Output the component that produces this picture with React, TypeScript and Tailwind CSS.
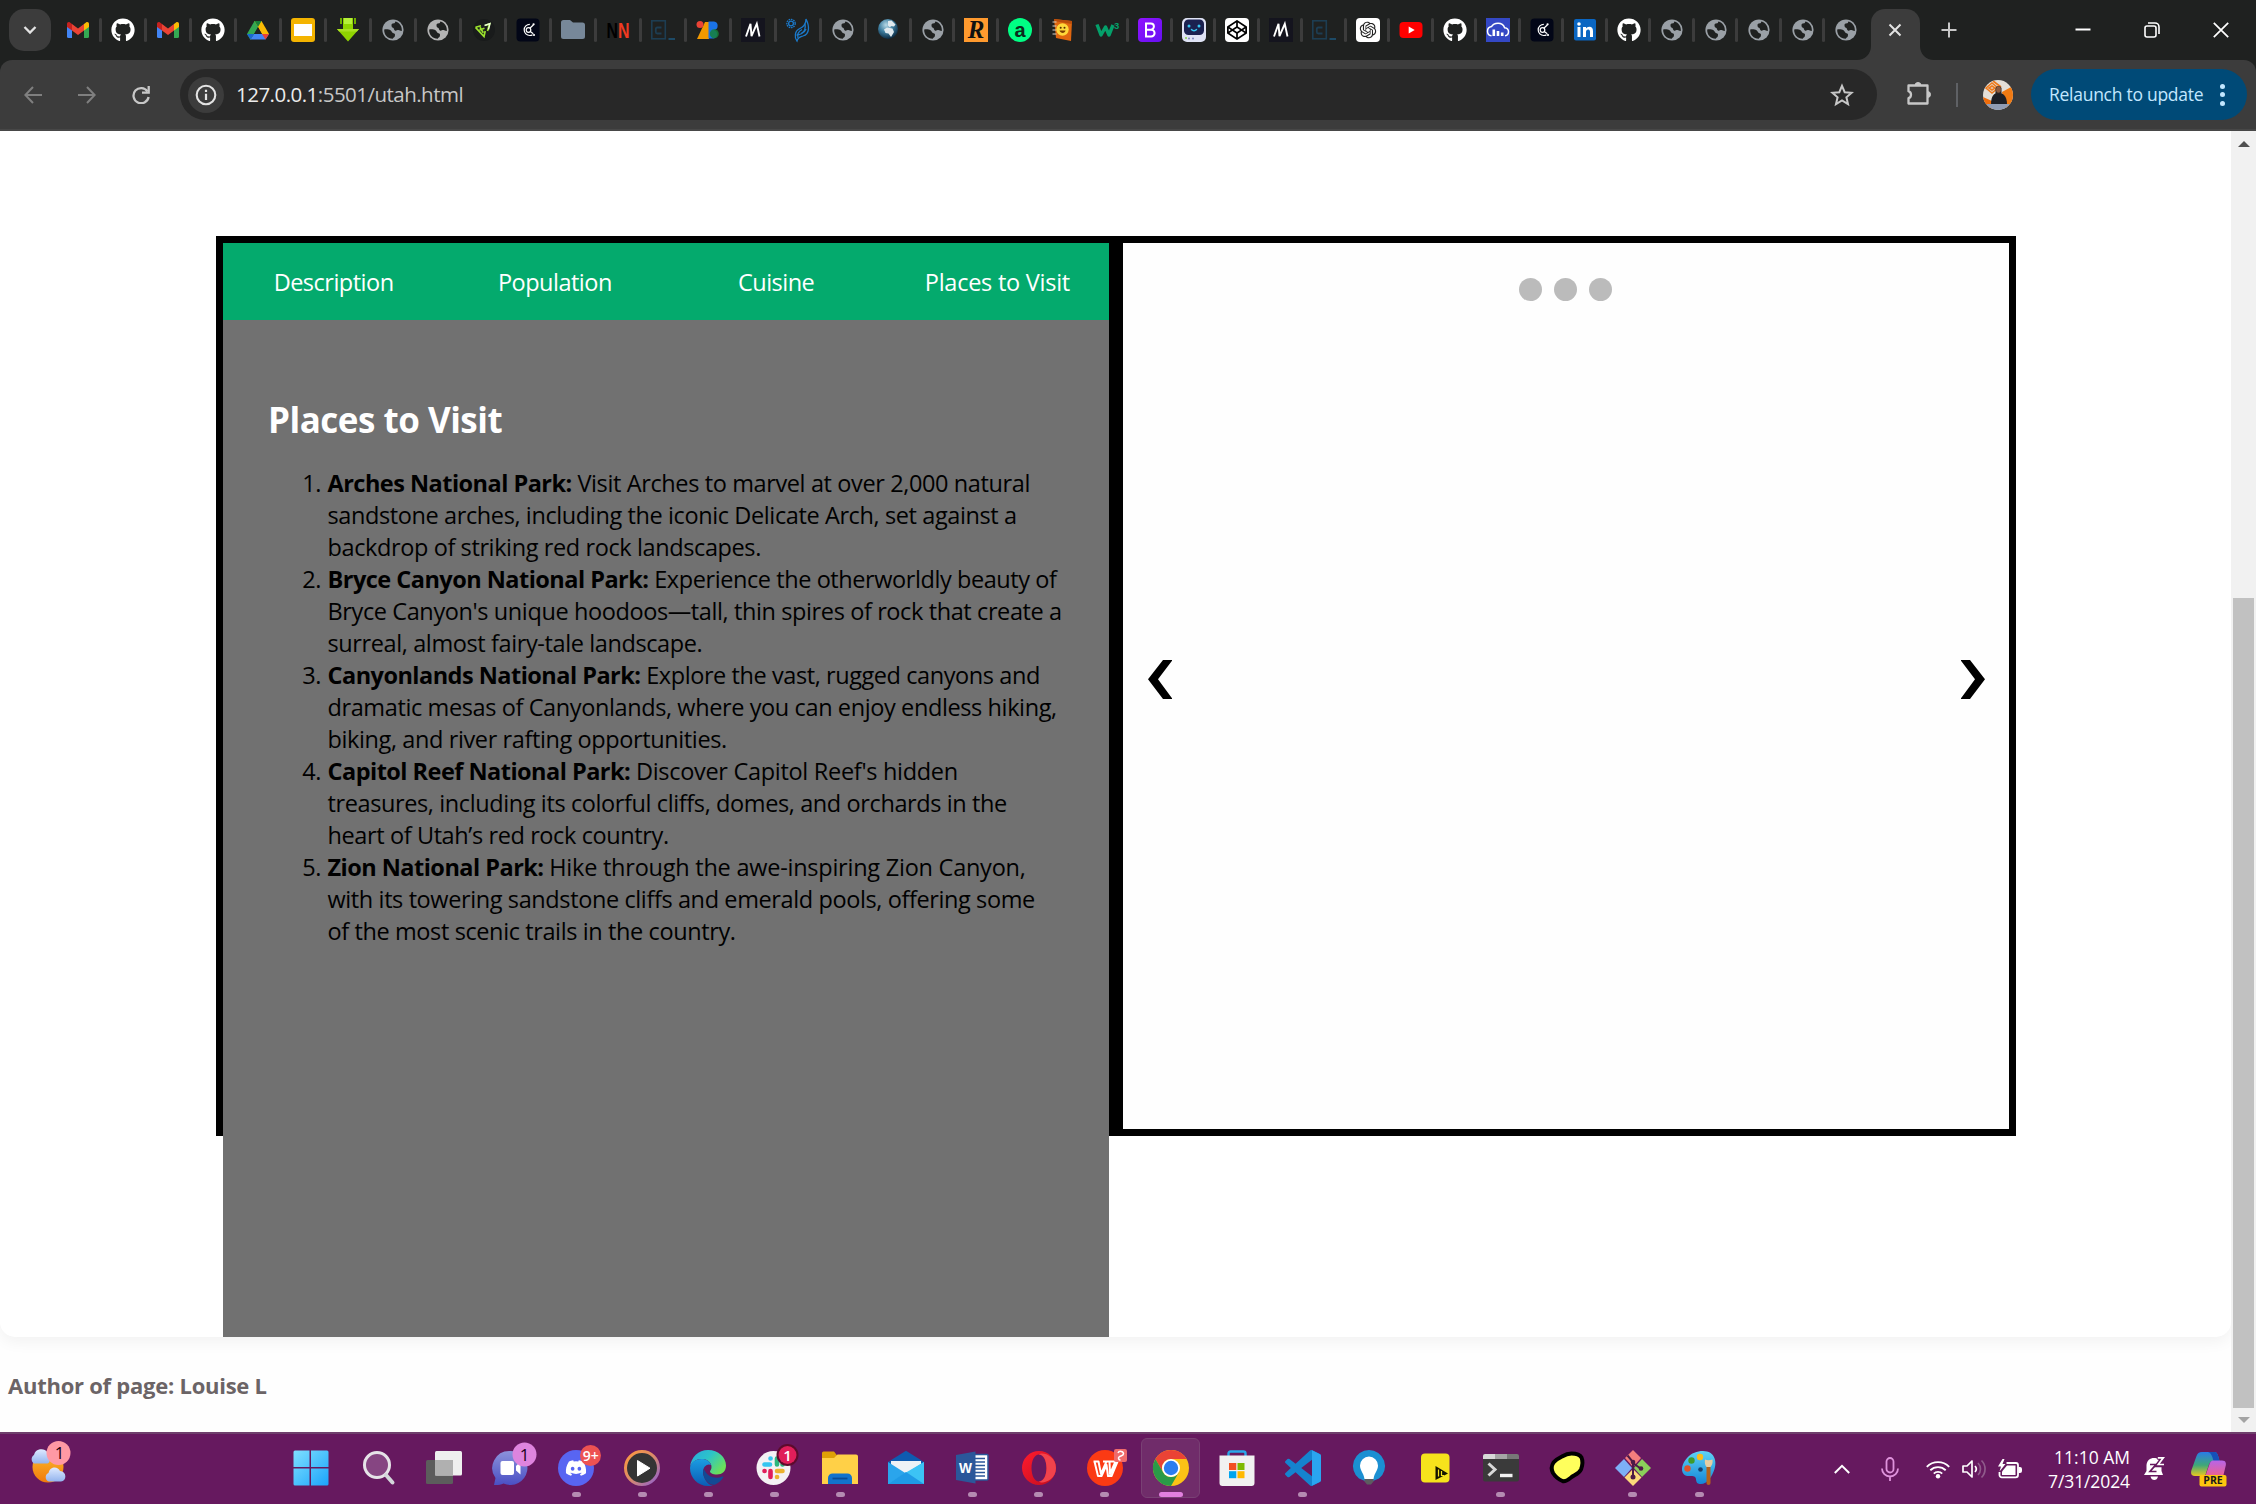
import type { ReactNode } from "react";
import { FaGithub, FaCodepen, FaDiscord } from "react-icons/fa";
import { RiOpenaiFill } from "react-icons/ri";

/* ---------- tab favicons ---------- */

const svg24 = "block h-6 w-6 overflow-visible";

function Gmail() {
  return (
    <svg viewBox="0 0 24 24" className={svg24}>
      <path d="M1 6v12.500A1.500 1.500 0 0 0 2.500 20H6V10z" fill="#4285f4" />
      <path d="M23 6v12.500A1.500 1.500 0 0 1 21.500 20H18V10z" fill="#34a853" />
      <path d="M18 6l2-1.500C21.500 3.500 23 4.500 23 6v3l-5 3.500z" fill="#fbbc04" />
      <path d="M6 12.500V6l6 4.500L18 6v6.500L12 17z" fill="#ea4335" />
      <path d="M1 6c0-1.500 1.500-2.500 3-1.500L6 6v6.500L1 9z" fill="#c5221f" />
    </svg>
  );
}
function Github() {
  return <FaGithub className="h-6 w-6 text-white" />;
}
function Drive() {
  return (
    <svg viewBox="0 0 24 24" className={svg24}>
      <path d="M8.500 3h7L8 16l-3.500 6L1 16z" fill="#34a853" />
      <path d="M8.500 3h7L23 16h-7z" fill="#fbbc04" />
      <path d="M8 16h15l-3.500 5.500h-15z" fill="#4285f4" />
      <path d="M8.500 3L12 9l3.500-6z" fill="#188038" />
      <path d="M23 16l-3.500 5.500L16 16z" fill="#ea4335" />
      <path d="M8 16l-3.500 5.500L1 16z" fill="#1967d2" />
      <path d="M12 9.500L15.700 16H8.200z" fill="#1f2120" />
    </svg>
  );
}
function Slides() {
  return (
    <svg viewBox="0 0 24 24" className={svg24}>
      <rect width="24" height="24" rx="3" fill="#f4b400" />
      <rect x="3" y="6" width="18" height="12" fill="#fff" />
    </svg>
  );
}
function DownArrow() {
  return (
    <svg viewBox="0 0 24 24" className={svg24}>
      <path d="M4 0h2v6H4zM18 0h2v6h-2z" fill="#6fae00" />
      <path d="M7 0h10v11h6L12 23.500 1 11h6z" fill="#8fd400" />
      <path d="M8 0h8v6H8z" fill="#b6f03a" />
      <path d="M1 11h22l-2 2.500H3z" fill="#a9e022" />
    </svg>
  );
}
function Globe({ light }: { light?: boolean }) {
  return (
    <svg viewBox="0 0 24 24" className={svg24}>
      <circle cx="12" cy="12" r="10.600" fill={light ? "#b3b3b3" : "#9aa0a6"} />
      <path
        d="M3.200 11.500C5 11 8 11.200 9.500 12.300c1.400 1 1.300 2.700 3 2.900.900.100 1.600.700 1.500 1.800l-.200 1.300c-.200 1-1.800 1.200-2 2.500C6.500 20.800 2.800 16.500 3.200 11.500z"
        fill="#1f2120"
      />
      <path
        d="M10.500 7.200c0-2 2.200-1.500 3.200-2.200.500-.400.300-1.200.800-1.500 4 1 6.800 5 6.300 9.500-1.300.300-2-.900-3.300-.900-1.600 0-2 .900-3.300.600-1.500-.400-.900-2.400-2.200-2.900-.900-.400-1.500-1.300-1.500-2.600z"
        fill="#1f2120"
      />
    </svg>
  );
}
function GlobeLight() {
  return <Globe light />;
}
function Triangle() {
  return (
    <svg viewBox="0 0 24 24" className={svg24}>
      <circle cx="13" cy="12" r="11" fill="#191b1b" />
      <path d="M4.500 9.300L13 18.500l1.200-5.500M4.500 9.300l5.500-1.600M9 9.300l3.300 5.500M8.500 12l5-1.800M14.500 7.200L18.500 6l-2 7" fill="none" stroke="#9be22d" strokeWidth="1.700" />
      <path d="M13.500 7.500l5.500-2-1.500 6" fill="none" stroke="#e8ffd0" strokeWidth="1.400" />
    </svg>
  );
}
function NightC() {
  return (
    <svg viewBox="0 0 24 24" className={svg24}>
      <rect x=".5" y=".5" width="23" height="23" rx="4" fill="#020617" />
      <path d="M13.800 6.300a5.600 5.600 0 1 0 0 11.200c1.200 0 2-.3 2.700-.8" fill="none" stroke="#fff" strokeWidth="1.200" />
      <circle cx="12.500" cy="12" r="2.300" fill="none" stroke="#fff" strokeWidth="1.200" />
      <path d="M13.800 10.200L17.300 7M14.300 13.500l3 2.300" stroke="#fff" strokeWidth="1.200" />
      <circle cx="17.600" cy="6.300" r="1.100" fill="#fff" />
      <circle cx="18" cy="17" r="1.100" fill="#fff" />
    </svg>
  );
}
function Folder() {
  return (
    <svg viewBox="0 0 24 24" className={svg24}>
      <path d="M0 4.500A2.500 2.500 0 0 1 2.500 2H9l3 2.500h9.500A2.500 2.500 0 0 1 24 7v11.500a2.500 2.500 0 0 1-2.500 2.500h-19A2.500 2.500 0 0 1 0 18.500z" fill="#778899" />
    </svg>
  );
}
function NN() {
  return (
    <svg viewBox="0 0 24 24" className={svg24}>
      <text x="0.500" y="20" fontFamily="Liberation Sans" fontWeight="700" fontSize="22" textLength="11.500" lengthAdjust="spacingAndGlyphs" fill="#000">N</text>
      <text x="12" y="20" fontFamily="Liberation Sans" fontWeight="700" fontSize="22" textLength="11.500" lengthAdjust="spacingAndGlyphs" fill="#f03a20">N</text>
    </svg>
  );
}
function Codecademy() {
  return (
    <svg viewBox="0 0 24 24" className={svg24}>
      <rect x=".8" y="2.800" width="13.500" height="18" fill="none" stroke="#1d3d52" strokeWidth="1.600" />
      <path d="M10.500 9.500H6.300c-1 0-1.500.5-1.500 1.500v3c0 1 .5 1.500 1.500 1.500h4.200" fill="none" stroke="#1d3d52" strokeWidth="1.800" />
      <path d="M17.500 21h6.500" stroke="#1d4a66" strokeWidth="2" />
    </svg>
  );
}
function SevenB() {
  return (
    <svg viewBox="0 0 24 24" className={svg24}>
      <path d="M9 4h4v17H1z" fill="#f29900" />
      <circle cx="4" cy="6.500" r="3.500" fill="#ea4335" />
      <path d="M12.500 3.500H18a4.300 4.300 0 0 1 0 8.500 4.500 4.500 0 0 1 0 8.500h-5.500z" fill="#1a73e8" />
      <circle cx="18.300" cy="15.800" r="4.500" fill="#188038" fillOpacity=".85" />
    </svg>
  );
}
function MimoM() {
  return (
    <svg viewBox="0 0 24 24" className={svg24}>
      <rect width="24" height="24" fill="#14141e" />
      <path d="M5 18.500L9.500 5.800 10.500 18.200 15.800 5.800 18.500 18.500" fill="none" stroke="#fff" strokeWidth="1.900" />
    </svg>
  );
}
function Feather() {
  return (
    <svg viewBox="0 0 24 24" className={svg24}>
      <g fill="none" stroke="#1b79c9" strokeWidth="1.300">
        <circle cx="5" cy="5.500" r="4.200" strokeDasharray="1.600 .8" />
        <circle cx="5" cy="5.500" r="2.400" />
        <path d="M20 1c3.500 7 4 15-3 17-3 1-5 1-6 5-3-4-2-10 2-12 4-2 7-4 7-10z" />
        <path d="M19 6c1 5-1 8-4 9.500M12 20c-1-4 1-7 4-8.500M10.500 17c3 0 8-2 9.500-6" />
      </g>
    </svg>
  );
}
function Earth() {
  return (
    <svg viewBox="0 0 24 24" className={svg24}>
      <defs>
        <radialGradient id="earth" cx=".4" cy=".3" r=".7">
          <stop offset="0" stopColor="#b7d9e6" />
          <stop offset=".5" stopColor="#3f7fa0" />
          <stop offset="1" stopColor="#0d2c44" />
        </radialGradient>
      </defs>
      <circle cx="12" cy="11" r="10" fill="url(#earth)" />
      <path d="M12 3l3.500-.5 4 4-1.500 2-3-.5-1 1.500-2-2zM8 11.500l3-2 5.500 1 1.500 3.500-3 5-2.500-3.500-3-.5z" fill="#dfe9ee" />
    </svg>
  );
}
function LetterTile({ bg, fg, ch, round, italic, serif }: { bg: string; fg: string; ch: string; round: number; italic?: boolean; serif?: boolean }) {
  return (
    <svg viewBox="0 0 24 24" className={svg24}>
      <rect width="24" height="24" rx={round} fill={bg} />
      <text x="12" y={serif ? 20 : 18.5} textAnchor="middle" fontFamily={serif ? "Liberation Serif" : "Liberation Sans"} fontWeight="700" fontStyle={italic ? "italic" : "normal"} fontSize={serif ? 25 : 20} fill={fg}>
        {ch}
      </text>
    </svg>
  );
}
function Notebook() {
  return (
    <svg viewBox="0 0 24 24" className={svg24}>
      <path d="M3 1l18 2-1 20-15-3z" fill="#e0660f" />
      <path d="M3 1l18 2-.2 3L3 3z" fill="#b94d0b" />
      <path d="M1.500 4h4M1.500 8h4M1.500 12h4M1.500 16h4" stroke="#d9d3c8" strokeWidth="1" />
      <circle cx="11.500" cy="11.500" r="6.200" fill="#ffd83a" />
      <path d="M8.500 12.500c1 3.300 5.500 3.300 6 0z" fill="#7a3c00" />
      <circle cx="9.700" cy="9.800" r="1" fill="#5a3000" />
      <circle cx="13.500" cy="9.800" r="1" fill="#5a3000" />
    </svg>
  );
}
function W3() {
  return (
    <svg viewBox="0 0 24 24" className={svg24}>
      <path d="M2 6.500L6 17l4.500-8 3.500 8 4-10" fill="none" stroke="#04a06a" strokeWidth="3.400" strokeLinejoin="round" />
      <text x="19" y="11" fontFamily="Liberation Sans" fontWeight="700" fontSize="9.500" fill="#04a06a">3</text>
    </svg>
  );
}
function Bootstrap() {
  return (
    <svg viewBox="0 0 24 24" className={svg24}>
      <defs>
        <linearGradient id="bs" x1="0" x2="1" y2="1">
          <stop offset="0" stopColor="#9013fe" />
          <stop offset="1" stopColor="#6610f2" />
        </linearGradient>
      </defs>
      <rect width="24" height="24" rx="4" fill="url(#bs)" />
      <path d="M8 5.500h4.800a3.100 3.100 0 0 1 0 6.200H8zM8 11.700h5.200a3.350 3.350 0 0 1 0 6.800H8z" fill="none" stroke="#fff" strokeWidth="2" />
    </svg>
  );
}
function Robot() {
  return (
    <svg viewBox="0 0 24 24" className={svg24}>
      <rect width="24" height="24" rx="5" fill="#dfe3f5" />
      <rect x="2" y="1.500" width="20" height="15.500" rx="4.500" fill="#1b2150" />
      <path d="M9.500 11.500c1.200 1.500 3.800 1.500 5 0" stroke="#35c5f0" strokeWidth="1.500" fill="none" strokeLinecap="round" />
      <circle cx="7" cy="8" r="1.500" fill="#35c5f0" />
      <circle cx="17" cy="8" r="1.500" fill="#35c5f0" />
      <circle cx="7" cy="20.500" r="1" fill="#8086c0" />
      <circle cx="11" cy="20.500" r="1" fill="#8086c0" />
      <circle cx="4" cy="20" r="1" fill="#8bd44a" />
    </svg>
  );
}
function Codepen() {
  return (
    <span className="flex h-6 w-6 items-center justify-center rounded bg-white">
      <FaCodepen className="h-5 w-5 text-black" />
    </span>
  );
}
function OpenAI() {
  return (
    <span className="flex h-6 w-6 items-center justify-center rounded bg-white">
      <RiOpenaiFill className="h-5 w-5 text-[#222]" />
    </span>
  );
}
function YouTube() {
  return (
    <svg viewBox="0 0 24 24" className={svg24}>
      <rect x=".5" y="4" width="23" height="16" rx="4" fill="#f00" />
      <path d="M9.700 8.500v7l6-3.500z" fill="#fff" />
    </svg>
  );
}
function CloudBars() {
  return (
    <svg viewBox="0 0 24 24" className={svg24}>
      <rect width="24" height="24" fill="#3448c5" />
      <path d="M5.500 17.800c-2.800-.3-4-2.500-4-4.600 0-2.300 1.800-4.200 4-4.600C6.600 6.500 9 5.200 12 5.200c3.500 0 5.700 1.800 6.600 4.500 2.300.3 3.900 1.700 3.900 4 0 1.900-1.200 3.700-3.500 4.100" fill="none" stroke="#fff" strokeWidth="1.500" />
      <path d="M7.800 11.500v6.500M12 13v5M16.200 14.500V18" stroke="#fff" strokeWidth="2.600" />
    </svg>
  );
}
function LinkedIn() {
  return (
    <svg viewBox="0 0 24 24" className={svg24}>
      <rect x="1" y="1" width="22" height="21.500" rx="2" fill="#0a66c2" />
      <path d="M4.500 9h3v10h-3zM10 9h3v1.500c.7-1.100 1.800-1.800 3.300-1.800 2.700 0 3.700 1.700 3.700 4.500V19h-3v-5.200c0-1.500-.5-2.400-1.800-2.400s-2.200 1-2.200 2.600v5h-3z" fill="#fff" />
      <circle cx="6" cy="6" r="1.800" fill="#fff" />
    </svg>
  );
}
const TileR = () => <LetterTile bg="#ff9a2e" fg="#111" ch="R" round={0} italic serif />;
const TileA = () => <LetterTile bg="#00ff84" fg="#0b2b1b" ch="a" round={12} />;

const wideTabs = [Gmail, Github, Gmail, Github, Drive, Slides, DownArrow, Globe, GlobeLight, Triangle, NightC, Folder, NN, Codecademy, SevenB, MimoM, Feather, Globe, Earth];
const narrowTabs = [Globe, TileR, TileA, Notebook, W3, Bootstrap, Robot, Codepen, MimoM, Codecademy, OpenAI, YouTube, Github, CloudBars, NightC, LinkedIn, Github, Globe, Globe, Globe, Globe, Globe];

function TabStrip() {
  return (
    <div className="flex h-[60px] shrink-0 bg-[#1f2120]">
      <div className="mt-[9px] ml-[9px] flex h-[42px] w-[42px] items-center justify-center rounded-[15px] bg-[#3c3c3c]">
        <svg viewBox="0 0 16 16" className="h-4 w-4" fill="none" stroke="#e3e3e3" strokeWidth="2.300">
          <path d="M2.500 5L8 10.500 13.500 5" />
        </svg>
      </div>
      <div className="flex h-[60px] pl-[5.5px]">
        {wideTabs.map((Icon, i) => (
          <div key={i} className="flex w-[45px] items-center justify-between pl-[9px]">
            <Icon />
            <span className="h-6 w-[3px] rounded-sm bg-[#3c3c3c]" />
          </div>
        ))}
        {narrowTabs.map((Icon, i) => (
          <div key={i} className="flex w-[43.5px] items-center justify-between pl-[9px]">
            <Icon />
            {i < narrowTabs.length - 1 && <span className="h-6 w-[3px] rounded-sm bg-[#3c3c3c]" />}
          </div>
        ))}
      </div>
      <div className="relative mt-[9px] ml-[2px] flex h-[51px] w-[49px] justify-center rounded-t-[14px] bg-[#3c3c3c] pt-[14px]">
        <svg viewBox="0 0 14 14" className="absolute bottom-0 -left-[14px] h-[14px] w-[14px]">
          <path d="M14 0v14H0C8 14 14 8 14 0z" fill="#3c3c3c" />
        </svg>
        <svg viewBox="0 0 14 14" className="absolute -right-[14px] bottom-0 h-[14px] w-[14px]">
          <path d="M0 0v14h14C6 14 0 8 0 0z" fill="#3c3c3c" />
        </svg>
        <svg viewBox="0 0 14 14" className="h-[14px] w-[14px]" stroke="#e3e3e3" strokeWidth="2">
          <path d="M1.500 1.500l11 11M12.500 1.500l-11 11" />
        </svg>
      </div>
      <svg viewBox="0 0 16 16" className="mt-[22px] ml-[21px] h-4 w-4" stroke="#c7c7c7" strokeWidth="2">
        <path d="M8 .5v15M.5 8h15" />
      </svg>
      <div className="mr-[27px] ml-auto flex items-center gap-[53px]">
        <svg viewBox="0 0 16 16" className="h-4 w-4" stroke="#fff" strokeWidth="2">
          <path d="M.5 7.500h15" />
        </svg>
        <svg viewBox="0 0 16 16" className="h-4 w-4" fill="none" stroke="#fff" strokeWidth="1.600">
          <rect x="1" y="4" width="11" height="11" rx="2" />
          <path d="M4 1h7a4 4 0 0 1 4 4v7" />
        </svg>
        <svg viewBox="0 0 16 16" className="h-4 w-4" stroke="#fff" strokeWidth="1.700">
          <path d="M.8.800l14.400 14.400M15.200.800L.8 15.200" />
        </svg>
      </div>
    </div>
  );
}

function Toolbar() {
  return (
    <div className="h-[71px] shrink-0 bg-[#1f2120]">
      <div className="flex h-[71px] items-center rounded-t-[12px] border-b-2 border-[#474747] bg-[#3c3c3c] font-['Open_Sans',sans-serif]">
        <svg viewBox="0 0 18 18" className="ml-6 h-[18px] w-[18px]" fill="none" stroke="#7f7f7f" strokeWidth="2">
          <path d="M18 9H1.500M9 1L1.300 9 9 17" />
        </svg>
        <svg viewBox="0 0 18 18" className="ml-9 h-[18px] w-[18px]" fill="none" stroke="#7f7f7f" strokeWidth="2">
          <path d="M0 9h16.500M9 1l7.700 8L9 17" />
        </svg>
        <svg viewBox="0 0 18 18" className="ml-9 h-[18px] w-[18px]" fill="none" stroke="#c7c7c7" strokeWidth="2.300">
          <path d="M15.500 5.500A7.600 7.600 0 1 0 16.600 11" />
          <path d="M16.700 0v6.700H10" />
        </svg>
        <div className="ml-[30px] flex h-[51px] w-[1697px] items-center rounded-full bg-[#282828]">
          <div className="ml-2 flex h-9 w-9 items-center justify-center rounded-full bg-[#3c3c3c]">
            <svg viewBox="0 0 22 22" className="h-[22px] w-[22px]">
              <circle cx="11" cy="11" r="9.300" fill="none" stroke="#e3e3e3" strokeWidth="2.100" />
              <path d="M11 9.800v6.200M11 5.800v2.200" stroke="#e3e3e3" strokeWidth="2.200" />
            </svg>
          </div>
          <span className="ml-3 text-[20.5px] tracking-[-0.52px] whitespace-nowrap text-[#c7c7c7]">
            <span className="text-[#ececec]">127.0.0.1</span>:5501/utah.html
          </span>
          <svg viewBox="0 0 24 24" className="mr-[23px] ml-auto h-6 w-6" fill="none" stroke="#c7c7c7" strokeWidth="2">
            <path d="M12 2.800l2.700 6.400 6.900.6-5.200 4.500 1.600 6.800-6-3.600-6 3.600 1.600-6.800-5.200-4.500 6.900-.6z" />
          </svg>
        </div>
        <svg viewBox="0 0 26 26" className="mb-[3px] ml-[29px] h-[26px] w-[26px]" fill="none" stroke="#c7c7c7" strokeWidth="2.300" strokeLinejoin="round">
          <path d="M2.500 5.500h19v18h-19v-5.300a3.700 3.700 0 0 0 0-7z" />
          <path d="M9 5.500a3 3 0 0 1 6 0zM21.500 11.500a3 3 0 0 1 0 6z" fill="#c7c7c7" strokeWidth="1" />
        </svg>
        <span className="ml-6 h-6 w-[2px] bg-[#5f6165]" />
        <svg viewBox="0 0 30 30" className="ml-[25px] h-[30px] w-[30px]">
          <defs>
            <clipPath id="avatar">
              <circle cx="15" cy="15" r="15" />
            </clipPath>
          </defs>
          <g clipPath="url(#avatar)">
            <rect width="30" height="30" fill="#e4dfd8" />
            <path d="M19 12L30 6v22H21z" fill="#f07a13" />
            <path d="M0 17l9 4v9H0z" fill="#ef6c0a" />
            <path d="M3 8l6-5 6 5-6 5zM10 1l8 6M6 8l3-2 3 2-3 2z" fill="none" stroke="#ee7a1c" strokeWidth="1.600" />
            <path d="M8 24c0-8 3-11 7.500-11S24 16 24 24z" fill="#1d1f26" />
            <path d="M12.500 14V8.500C12.500 5 18.500 5 18.500 8.500V14z" fill="#2a2423" />
            <ellipse cx="15.500" cy="9.500" rx="2.400" ry="3.300" fill="#8d5b40" />
            <path d="M4 24h22v6H4z" fill="#8f9bb3" />
          </g>
        </svg>
        <div className="ml-[18px] flex h-[51px] w-[216px] items-center rounded-full bg-[#004a77]">
          <span className="ml-[18px] text-[17.5px] tracking-[-0.27px] whitespace-nowrap text-[#c2e7ff]">Relaunch to update</span>
          <span className="mr-[22px] ml-auto flex flex-col gap-[3.5px]">
            <span className="h-[5px] w-[5px] rounded-full bg-[#c2e7ff]" />
            <span className="h-[5px] w-[5px] rounded-full bg-[#c2e7ff]" />
            <span className="h-[5px] w-[5px] rounded-full bg-[#c2e7ff]" />
          </span>
        </div>
      </div>
    </div>
  );
}

/* ---------- web page ---------- */

const parks: { name: string; lines: string[]; lead: string }[] = [
  {
    name: "Arches National Park:",
    lead: "tracking-[-0.38px]",
    lines: ["Visit Arches to marvel at over 2,000 natural", "sandstone arches, including the iconic Delicate Arch, set against a", "backdrop of striking red rock landscapes."],
  },
  {
    name: "Bryce Canyon National Park:",
    lead: "tracking-[-0.42px]",
    lines: ["Experience the otherworldly beauty of", "Bryce Canyon's unique hoodoos—tall, thin spires of rock that create a", "surreal, almost fairy-tale landscape."],
  },
  {
    name: "Canyonlands National Park:",
    lead: "tracking-[-0.42px]",
    lines: ["Explore the vast, rugged canyons and", "dramatic mesas of Canyonlands, where you can enjoy endless hiking,", "biking, and river rafting opportunities."],
  },
  {
    name: "Capitol Reef National Park:",
    lead: "tracking-[-0.3px]",
    lines: ["Discover Capitol Reef's hidden", "treasures, including its colorful cliffs, domes, and orchards in the", "heart of Utah’s red rock country."],
  },
  {
    name: "Zion National Park:",
    lead: "tracking-[-0.24px]",
    lines: ["Hike through the awe-inspiring Zion Canyon,", "with its towering sandstone cliffs and emerald pools, offering some", "of the most scenic trails in the country."],
  },
];

function InfoPanel() {
  return (
    <section className="h-[900px] w-[900px] border-[7px] border-black">
      <nav className="grid h-[77px] grid-cols-4 bg-[#04aa6d] pr-[1px] text-center text-[23.5px] leading-[79px] tracking-[-0.5px] text-white">
        <a>Description</a>
        <a>Population</a>
        <a>Cuisine</a>
        <a className="tracking-[-0.25px]">Places to Visit</a>
      </nav>
      <div className="h-[1017px] bg-[#717171] pt-[76px] pl-[45px]">
        <h2 className="text-[35px] leading-[48px] font-bold tracking-[-0.5px] text-white">Places to Visit</h2>
        <ol className="mt-[23px] text-[23.5px] leading-8 tracking-[-0.39px] text-black">
          {parks.map((park, i) => (
            <li key={park.name} className="flex">
              <span className="w-[53px] text-right">{i + 1}.</span>
              <p className="ml-[6.5px] whitespace-nowrap">
                <strong className="font-bold tracking-[-0.52px]">{park.name}</strong> <span className={park.lead}>{park.lines[0]}</span>
                <br />
                {park.lines[1]}
                <br />
                {park.lines[2]}
              </p>
            </li>
          ))}
        </ol>
      </div>
    </section>
  );
}

function Slideshow() {
  return (
    <section className="flex h-[900px] w-[900px] flex-col border-[7px] border-black bg-[#fefefe] pt-[35px]">
      <div className="flex justify-center gap-3 pr-[2px]">
        <span className="h-[23px] w-[23px] rounded-full bg-[#bbb]" />
        <span className="h-[23px] w-[23px] rounded-full bg-[#bbb]" />
        <span className="h-[23px] w-[23px] rounded-full bg-[#bbb]" />
      </div>
      <div className="mt-[359px] flex justify-between pr-[24.5px] pl-[25px]">
        <svg viewBox="0 0 24 39" className="h-[39px] w-6">
          <path d="M15 0h9.500L10 19.300 24.500 39H15L0 19.300z" />
        </svg>
        <svg viewBox="0 0 24 39" className="h-[39px] w-6">
          <path d="M9 0H-.5L14 19.300-.5 39H9L24 19.300z" />
        </svg>
      </div>
    </section>
  );
}

function WebPage() {
  return (
    <div className="flex h-[1301px] shrink-0 bg-[#fefefe] font-['Open_Sans',sans-serif]">
      <div className="w-[2231px] overflow-hidden">
        <main className="flex h-[1206px] rounded-b-[15px] bg-white pt-[105px] pl-[216px] shadow-[0_5px_15px_rgba(0,0,0,0.05)]">
          <InfoPanel />
          <Slideshow />
        </main>
        <footer className="pt-8 pl-2 text-[22px] leading-8 font-bold tracking-[-0.25px] text-[#6b6466]">Author of page: Louise L</footer>
      </div>
      <div className="flex w-[25px] flex-col items-center bg-[#f1f1f1]">
        <svg viewBox="0 0 12 6" className="mt-[10px] h-[6px] w-3" fill="#505050">
          <path d="M6 0l6 6H0z" />
        </svg>
        <span className="mt-[451px] h-[810px] w-[21px] bg-[#c1c1c1]" />
        <svg viewBox="0 0 12 6" className="mt-[9px] h-[6px] w-3" fill="#a3a3a3">
          <path d="M6 6L0 0h12z" />
        </svg>
      </div>
    </div>
  );
}

/* ---------- taskbar ---------- */

const svg36 = "block h-9 w-9 overflow-visible";

function Start() {
  return (
    <svg viewBox="0 0 36 36" className={svg36}>
      <defs>
        <linearGradient id="win" x1="0" y1="0" x2="1" y2="1" gradientUnits="objectBoundingBox">
          <stop offset="0" stopColor="#7fe0ff" />
          <stop offset="1" stopColor="#1ba4fb" />
        </linearGradient>
      </defs>
      <path d="M1 .5h14.500v16.500H-.5V2A1.500 1.500 0 0 1 1 .5zM17 .5h16A1.500 1.500 0 0 1 34.500 2v15H17zM-.5 18.500h16v17H1A1.500 1.500 0 0 1-.5 34zM17 18.500h17.500V34a1.500 1.500 0 0 1-1.500 1.500H17z" fill="url(#win)" />
    </svg>
  );
}
function Search() {
  return (
    <svg viewBox="0 0 36 36" className={svg36}>
      <circle cx="17" cy="15" r="12.500" fill="#864582" stroke="#e6e3e8" strokeWidth="3" />
      <path d="M26 25l6.500 7.500" stroke="#d3d6da" strokeWidth="4" strokeLinecap="round" />
    </svg>
  );
}
function TaskView() {
  return (
    <svg viewBox="0 0 36 36" className={svg36}>
      <rect x="0" y="10" width="27" height="24" rx="1.500" fill="#5c5c5c" />
      <rect x="9" y="1" width="27" height="24.500" rx="1.500" fill="#efefef" />
      <path d="M9 10h18v15.500H9z" fill="#b0b0b0" />
    </svg>
  );
}
function Chat() {
  return (
    <svg viewBox="0 0 36 36" className={svg36}>
      <defs>
        <linearGradient id="chat" x1="0" y1="0" x2="0" y2="1">
          <stop offset="0" stopColor="#8c93dc" />
          <stop offset="1" stopColor="#4a4fc4" />
        </linearGradient>
      </defs>
      <path d="M17.500 1a17 17 0 1 1-6 32.500c-3 1.300-6 1.800-9.500 1.500l1.500-7A17 17 0 0 1 17.500 1z" fill="url(#chat)" />
      <rect x="8.500" y="11" width="13.500" height="14" rx="2" fill="#fff" />
      <path d="M24 16l4.500-4.500v13L24 20.500z" fill="#fff" />
      <circle cx="32.500" cy="4.500" r="12" fill="#de84de" />
      <text x="32.500" y="11" textAnchor="middle" fontFamily="Open Sans" fontSize="17" fill="#1a001a">1</text>
    </svg>
  );
}
function Discord() {
  return (
    <div className="relative flex h-9 w-9 items-center justify-center rounded-full bg-[#5865f2]">
      <FaDiscord className="h-[22px] w-[22px] text-white" />
      <span className="absolute -top-[5px] left-[22px] flex h-[21px] w-[21px] items-center justify-center rounded-full bg-[#ed5252] font-['Open_Sans',sans-serif] text-[14px] font-semibold text-white">9+</span>
    </div>
  );
}
function Player() {
  return (
    <svg viewBox="0 0 36 36" className={svg36}>
      <defs>
        <linearGradient id="ring" x1="0" y1="0" x2="1" y2="1">
          <stop offset="0" stopColor="#ff9a3c" />
          <stop offset=".5" stopColor="#d98a6a" />
          <stop offset="1" stopColor="#8d5fd3" />
        </linearGradient>
      </defs>
      <circle cx="18" cy="18" r="16.500" fill="#343434" stroke="url(#ring)" strokeWidth="3" />
      <path d="M13.500 10.500v15.500L26 18.200z" fill="#fff" stroke="#fff" strokeWidth="1" strokeLinejoin="round" />
    </svg>
  );
}
function Edge() {
  return (
    <svg viewBox="0 0 36 36" className={svg36}>
      <defs>
        <linearGradient id="edgeTop" x1="0" y1="0" x2="1" y2=".6">
          <stop offset="0" stopColor="#2aa7e0" />
          <stop offset=".5" stopColor="#2cc3c9" />
          <stop offset="1" stopColor="#6be05a" />
        </linearGradient>
        <linearGradient id="edgeLow" x1="0" y1="0" x2="0" y2="1">
          <stop offset="0" stopColor="#1b9de2" />
          <stop offset="1" stopColor="#0b5cb4" />
        </linearGradient>
      </defs>
      <path d="M0 17C1 7 8.500 0 18 0c10.500 0 18 7.500 18 15.500 0 6-4 9-9 9-4.500 0-7-1.500-7-3 0-1 1.500-1.500 1.500-4.500C21.500 12.500 17 9 12 9 6 9 1.500 12.500 0 17z" fill="url(#edgeTop)" />
      <path d="M0 18C.5 12.500 5.500 9 11.500 9c5 0 8.500 2.500 9.500 6-3-2-8 1-8 7 0 6 5 13.500 10 13.400C20 36 19 36 18 36 8 36 0 28 0 18z" fill="url(#edgeLow)" />
      <path d="M13.200 20c-1 8 5 15.500 11.500 14.700 4-1.600 7-4.700 8.600-7.500.4-.8-.3-1-1-.6-7 3-14.500-.2-17-5-.8-1.500-1.800-2.600-2.100-1.600z" fill="#134a94" />
    </svg>
  );
}
function Slack() {
  return (
    <svg viewBox="0 0 36 36" className={svg36}>
      <circle cx="17.500" cy="18" r="17" fill="#f4f1f4" />
      <g strokeWidth="4.600" strokeLinecap="round">
        <path d="M8.500 14.500h5.500M14.500 8.500h.1" stroke="#36c5f0" />
        <path d="M21 8.500v6M26.500 14.500h.1" stroke="#2eb67d" />
        <path d="M21 21h5.500M21 27h.1" stroke="#ecb22e" />
        <path d="M14.500 21v6M8.500 21h.1" stroke="#e01e5a" />
      </g>
      <circle cx="31.500" cy="5" r="11" fill="#5c0b2c" />
      <circle cx="31.500" cy="5" r="9" fill="#e01e5a" />
      <text x="31.500" y="10.500" textAnchor="middle" fontFamily="Open Sans" fontWeight="600" fontSize="15" fill="#fff">1</text>
    </svg>
  );
}
function Explorer() {
  return (
    <svg viewBox="0 0 36 36" className={svg36}>
      <path d="M0 3a1.500 1.500 0 0 1 1.500-1.500H12L15.500 6 12 9H0z" fill="#dfa006" />
      <path d="M0 8h12l3.500-3.500H34A2 2 0 0 1 36 6.500V34H0z" fill="#ffd047" />
      <path d="M6 34V28a4.500 4.500 0 0 1 4.500-4.500h15A4.500 4.500 0 0 1 30 28v6z" fill="#1273cc" />
      <path d="M10.500 28.500h15" stroke="#0b4c94" strokeWidth="1.800" />
    </svg>
  );
}
function Mail() {
  return (
    <svg viewBox="0 0 36 36" className={svg36}>
      <path d="M0 12L18 .8 36 12v4H0z" fill="#0f5bb0" />
      <path d="M3 11h30v12H3z" fill="#eef2f6" />
      <path d="M0 12l18 11.500L36 12v22H0z" fill="#2aa5ec" />
      <path d="M0 34l18-11.500L36 12v22z" fill="#3cc3f5" />
      <path d="M0 34h36L18 22z" fill="#1f9ae6" />
    </svg>
  );
}
function Word() {
  return (
    <svg viewBox="0 0 36 36" className={svg36}>
      <rect x="17" y="4.500" width="17" height="25.500" rx="1" fill="#fff" stroke="#2b579a" strokeWidth="1.500" />
      <path d="M20 8.500h11M20 12h11M20 15.500h11M20 19h11M20 22.500h11M20 26h11" stroke="#2b579a" strokeWidth="1.500" />
      <path d="M2 5L21.500 1.500v32L2 30z" fill="#2b579a" />
      <text x="11.500" y="23" textAnchor="middle" fontFamily="Liberation Sans" fontWeight="700" fontSize="15" textLength="13" lengthAdjust="spacingAndGlyphs" fill="#fff">W</text>
    </svg>
  );
}
function Opera() {
  return (
    <svg viewBox="0 0 36 36" className={svg36}>
      <defs>
        <linearGradient id="opera" x1="0" y1="0" x2="1" y2="1">
          <stop offset="0" stopColor="#ff1b2d" />
          <stop offset="1" stopColor="#c00d1e" />
        </linearGradient>
      </defs>
      <path d="M18 1a17 17 0 1 0 0 34 17 17 0 0 0 0-34zm0 3.500c4.300 0 7.500 5.800 7.500 13.500S22.300 31.500 18 31.500 10.500 25.700 10.500 18 13.700 4.500 18 4.500z" fill="url(#opera)" fillRule="evenodd" />
      <path d="M18 4.500c3-3 17 1 17 13.500S21 34.500 18 31.500c4.300 0 7.500-5.800 7.500-13.500S22.300 4.500 18 4.500z" fill="#f2434c" />
    </svg>
  );
}
function Wps() {
  return (
    <svg viewBox="0 0 36 36" className={svg36}>
      <circle cx="18" cy="18" r="18" fill="#fb3a14" />
      <path d="M6.500 11.500h5L14 24l5.500-12.500h3L23 24l5.500-12.500H16M7.500 11.500L11 26h3.500l5-11L21 26h3.500L30.500 11.500" fill="none" stroke="#fff" strokeWidth="2" strokeLinejoin="round" />
      <rect x="27" y="-1" width="13" height="13" rx="2" fill="#ef6b6b" />
      <path d="M31 3c1-2.500 5.500-2 5.500.8 0 2.200-3 2-4.500 3.200-1 1-.5 3 1.500 3" fill="none" stroke="#fff" strokeWidth="1.500" />
    </svg>
  );
}
function Chrome() {
  return (
    <svg viewBox="0 0 36 36" className={svg36}>
      <circle cx="18" cy="18" r="18" fill="#fbc116" />
      <path d="M18 0a18 18 0 0 1 15.600 9H18a9 9 0 0 0-7.800 13.500L2.400 9A18 18 0 0 1 18 0z" fill="#ea4335" />
      <path d="M2.400 9l7.800 13.500a9 9 0 0 0 15.600 0L18 36A18 18 0 0 1 2.400 9z" fill="#2a9a48" />
      <circle cx="18" cy="18" r="9" fill="#fff" />
      <circle cx="18" cy="18" r="7.200" fill="#2c7df0" />
    </svg>
  );
}
function Store() {
  return (
    <svg viewBox="0 0 36 36" className={svg36}>
      <path d="M9.500 8V3.500A2 2 0 0 1 11.500 1.500h13A2 2 0 0 1 26.500 3.500V8" fill="none" stroke="#29a8ea" strokeWidth="2.400" />
      <path d="M.5 5.500h35V33a3 3 0 0 1-3 3h-29a3 3 0 0 1-3-3z" fill="#f1f1f1" />
      <path d="M10 13h7.300v7H10z" fill="#f25022" />
      <path d="M18.500 13h7v7h-7z" fill="#7fba00" />
      <path d="M10 21.200h7.300v7H10z" fill="#00a4ef" />
      <path d="M18.500 21.200h7v7h-7z" fill="#ffb900" />
    </svg>
  );
}
function VSCode() {
  return (
    <svg viewBox="0 0 24 24" className={svg36}>
      <path d="M23.150 2.587L18.210.210a1.494 1.494 0 0 0-1.705.290l-9.460 8.630-4.120-3.128a.999.999 0 0 0-1.276.057L.327 7.261A1 1 0 0 0 .326 8.740L3.899 12 .326 15.260a1 1 0 0 0 .001 1.479L1.650 17.940a.999.999 0 0 0 1.276.057l4.120-3.128 9.460 8.630a1.492 1.492 0 0 0 1.704.290l4.942-2.377A1.500 1.500 0 0 0 24 20.060V3.939a1.500 1.500 0 0 0-.850-1.352zm-5.146 14.861L10.826 12l7.178-5.448v10.896z" fill="#1583cf" />
      <path d="M18 .100l5.150 2.487A1.500 1.500 0 0 1 24 3.939V20.060a1.500 1.500 0 0 1-.850 1.352L18 23.900z" fill="#2aa5f0" />
    </svg>
  );
}
function Bulb() {
  return (
    <svg viewBox="0 0 36 36" className={svg36}>
      <path d="M18 0a16 16 0 0 1 10 28.500L22 31h-8l-6-2.500A16 16 0 0 1 18 0z" fill="#1b8fd2" />
      <path d="M18 6.500a9 9 0 0 1 9 9c0 5-3.500 7-4.500 13.500h-9C12.500 22.500 9 20.500 9 15.500a9 9 0 0 1 9-9z" fill="#fff" />
      <path d="M13.500 29h9v2.500L20 34.500h-4l-2.500-3z" fill="#5c5c60" />
    </svg>
  );
}
function YellowCard() {
  return (
    <svg viewBox="0 0 36 36" className={svg36}>
      <rect x="4" y="3.500" width="28.500" height="29" rx="4" fill="#f6e31c" />
      <path d="M18.500 16v14l12.500-6.500z" fill="#141400" />
      <path d="M21.500 19.500v7M24.500 21v4.500h2.500" fill="none" stroke="#f6e31c" strokeWidth="1.200" />
    </svg>
  );
}
function Terminal() {
  return (
    <svg viewBox="0 0 36 36" className={svg36}>
      <rect x="0" y="4" width="36" height="27.500" rx="2" fill="#3a3a3a" />
      <path d="M0 9V6a2 2 0 0 1 2-2h10v5z" fill="#d8d8d8" />
      <path d="M12 4h12v5H12z" fill="#a5a5a5" />
      <path d="M24 4h10a2 2 0 0 1 2 2v3H24z" fill="#777" />
      <path d="M5.500 13.500l6.500 6-6.500 6" fill="none" stroke="#d8d8d8" strokeWidth="3" />
      <path d="M17 25.500h12.500" stroke="#f2f2f2" strokeWidth="3.400" />
    </svg>
  );
}
function YellowStone() {
  return (
    <svg viewBox="0 0 36 36" className={svg36}>
      <path d="M13 6.500c3-1.800 6-3 9.500-3 4 0 8 .5 10 4 1.500 3.500 1 8-.5 12-2 4.500-7 5.500-10 8-2 1.500-5 4.500-8.500 3.500-4-1.500-7-4-9.500-8-2-4-1.500-7.500.5-10.500 2-2.500 5.500-4.500 8.500-6z" fill="#ffff5c" stroke="#000" strokeWidth="4" />
    </svg>
  );
}
function Git() {
  return (
    <svg viewBox="0 0 36 36" className={svg36}>
      <path d="M18 0l8 8-8 9-8-9z" fill="#f47d7d" />
      <path d="M9 9l8 9-8 9-9-9z" fill="#7db0f7" />
      <path d="M27 9l9 9-9 9-8-9z" fill="#8bd05a" />
      <path d="M18 19l8.500 8.500L18 36l-8.500-8.500z" fill="#fbd97a" />
      <path d="M12.500 5.500L18 12v15M18 13l7.500 5.500" fill="none" stroke="#4d1a47" strokeWidth="2" />
      <circle cx="18" cy="12" r="2.300" fill="#4d1a47" />
      <circle cx="26" cy="18.500" r="2.300" fill="#4d1a47" />
      <circle cx="18" cy="27" r="2.500" fill="#4d1a47" />
    </svg>
  );
}
function Paint() {
  return (
    <svg viewBox="0 0 36 36" className={svg36}>
      <defs>
        <linearGradient id="paint" x1="0" y1="0" x2="0" y2="1">
          <stop offset="0" stopColor="#5fd3f6" />
          <stop offset="1" stopColor="#1385d8" />
        </linearGradient>
      </defs>
      <path d="M22 1C34 1 36 12 33.500 19c-2.500 8-7.500 16-15 15-4.500-.6-2.500-5-4.500-7-2.500-2.500-8 .5-11-2.500C-1 20 1.500 13 6 8s10-7 16-7z" fill="url(#paint)" />
      <circle cx="19" cy="7" r="3.200" fill="#fbbc1a" />
      <circle cx="10.500" cy="10.500" r="3.200" fill="#3f9b2d" />
      <circle cx="6.500" cy="18.500" r="3.200" fill="#e0532b" />
      <circle cx="19.500" cy="19.500" r="2.300" fill="#17406e" />
      <path d="M25.500 16.500h4V33a2 2 0 0 1-4 0z" fill="#b3621b" />
      <path d="M24 9.500c2 1 5 1 7.500 0 .5 4-.5 5.500-2 7.500h-4c-1.500-2-2-4-1.500-7.500z" fill="#e6cda3" />
    </svg>
  );
}

type TaskbarApp = { Icon: () => ReactNode; state?: "running" | "active" };
const apps: TaskbarApp[] = [
  { Icon: Start },
  { Icon: Search },
  { Icon: TaskView },
  { Icon: Chat },
  { Icon: Discord, state: "running" },
  { Icon: Player, state: "running" },
  { Icon: Edge, state: "running" },
  { Icon: Slack, state: "running" },
  { Icon: Explorer, state: "running" },
  { Icon: Mail },
  { Icon: Word, state: "running" },
  { Icon: Opera, state: "running" },
  { Icon: Wps, state: "running" },
  { Icon: Chrome, state: "active" },
  { Icon: Store },
  { Icon: VSCode, state: "running" },
  { Icon: Bulb },
  { Icon: YellowCard },
  { Icon: Terminal, state: "running" },
  { Icon: YellowStone },
  { Icon: Git, state: "running" },
  { Icon: Paint, state: "running" },
];

function Tray() {
  return (
    <div className="flex h-[70px] items-center">
      <svg viewBox="0 0 16 10" className="h-[10px] w-4" fill="none" stroke="#fff" strokeWidth="2">
        <path d="M.8 9L8 1.800 15.200 9" />
      </svg>
      <svg viewBox="0 0 18 24" className="ml-[31px] h-6 w-[18px]" fill="none" stroke="#df93dc" strokeWidth="1.800">
        <rect x="5.500" y="1" width="7" height="14.500" rx="3.500" />
        <path d="M1 11.500a8 8 0 0 0 16 0M9 19.500V24" />
      </svg>
      <svg viewBox="0 0 24 20" className="ml-[27px] h-5 w-6" fill="none" stroke="#fff" strokeWidth="1.900">
        <path d="M.8 7.800a15.800 15.800 0 0 1 22.400 0M4.300 11.300a11 11 0 0 1 15.400 0M7.800 14.600a6 6 0 0 1 8.400 0" />
        <circle cx="12" cy="17.300" r="2.200" fill="#fff" stroke="none" />
      </svg>
      <svg viewBox="0 0 24 20" className="ml-3 h-5 w-6" fill="none" stroke="#fff" strokeWidth="1.700">
        <path d="M1 7h4l5-5v16l-5-5H1zM13 7a4.500 4.500 0 0 1 0 6" strokeLinejoin="round" />
        <path d="M16 4a8.500 8.500 0 0 1 0 12M19.500 1.500a12 12 0 0 1 0 17" stroke="#8f5b8b" />
      </svg>
      <svg viewBox="0 0 24 20" className="ml-3 h-5 w-6">
        <path d="M8.500 4H18a2 2 0 0 1 2 2v10a2.300 2.300 0 0 1-2.300 2.300H3.800A2.300 2.300 0 0 1 1.500 16v-3" fill="none" stroke="#fff" strokeWidth="1.800" />
        <path d="M9 6.500h8.500v9.500H4v-3.500z" fill="#fff" />
        <path d="M20.500 8H22a2 2 0 0 1 2 2v2a2 2 0 0 1-2 2h-1.500z" fill="#fff" />
        <path d="M4.500 0L0 7.500h3L1.500 12.500 7.500 5h-3L6.500 0z" fill="#fff" />
      </svg>
      <div className="ml-[25px] w-[83px] text-right font-['Open_Sans',sans-serif] text-[17.5px] leading-6 whitespace-nowrap text-white">
        11:10 AM
        <br />
        <span className="tracking-[-0.1px]">7/31/2024</span>
      </div>
      <svg viewBox="0 0 22 24" className="mb-[2px] ml-[13px] h-6 w-[22px]">
        <path d="M3.500 9C4 4.500 7 2 11 2s7 2.500 7.500 7v6l1.500 4H1l2.500-4z" fill="#fff" />
        <path d="M7.500 20.500h7.500c-.5 2.500-2 3.500-3.700 3.500S8 23 7.500 20.500z" fill="#fff" />
        <path d="M7 8.500h6L7 15.500h6.500" fill="none" stroke="#66195f" strokeWidth="1.700" />
        <path d="M14.300 1.500h6L14.800 9H21" fill="none" stroke="#66195f" strokeWidth="4.500" />
        <path d="M14.800 1.800h5.500l-5 6.700H21" fill="none" stroke="#fff" strokeWidth="1.700" />
      </svg>
      <svg viewBox="0 0 36 36" className="ml-[26px] h-9 w-9">
        <defs>
          <linearGradient id="copA" x1="0" y1="0" x2="0" y2="1">
            <stop offset="0" stopColor="#2a7be8" />
            <stop offset=".55" stopColor="#3fa878" />
            <stop offset="1" stopColor="#e8c820" />
          </linearGradient>
          <linearGradient id="copB" x1="0" y1="0" x2="0" y2="1">
            <stop offset="0" stopColor="#b765e8" />
            <stop offset="1" stopColor="#f0608a" />
          </linearGradient>
        </defs>
        <path d="M11 1h12c3 0 3.500 2 4.500 5l1 4h-6c-2.500 0-3.500 1-4.500 3.500L14 25H4c-4 0-4.500-3-3.500-6L5.500 5C6.500 2.500 8 1 11 1z" fill="url(#copA)" />
        <path d="M17 1h6c3 0 3.500 2 4.500 5l1 4h-6c-1-4-2-8-5.500-9z" fill="#1650b8" />
        <path d="M22.500 9.500H31c4 0 4.500 3 3.500 6L32 26H14l4-11.500c1-3.500 2-5 4.500-5z" fill="url(#copB)" />
        <rect x="8.500" y="24" width="27" height="11.500" rx="2" fill="#fcc60f" />
        <text x="22" y="33.300" textAnchor="middle" fontFamily="Open Sans" fontWeight="700" fontSize="10.500" fill="#1a1a1a">PRE</text>
      </svg>
    </div>
  );
}

function Taskbar() {
  return (
    <div className="flex h-[72px] shrink-0 border-t-2 border-[#6f3f6c] bg-[#66195f]">
      <svg viewBox="0 0 42 42" className="mt-2 ml-[29px] h-[42px] w-[42px] overflow-visible">
        <defs>
          <linearGradient id="sun" x1="0" y1="0" x2="0" y2="1">
            <stop offset="0" stopColor="#fcbc2c" />
            <stop offset="1" stopColor="#f0790c" />
          </linearGradient>
          <linearGradient id="cloud" x1="0" y1="0" x2="0" y2="1">
            <stop offset="0" stopColor="#dfeaff" />
            <stop offset="1" stopColor="#93b4ee" />
          </linearGradient>
        </defs>
        <circle cx="19" cy="25" r="15.500" fill="url(#sun)" />
        <path d="M5 21.500a5 5 0 0 1 0-8.500 7.500 7.500 0 0 1 13.500-2.500c4 2 3 11 0 11z" fill="url(#cloud)" />
        <path d="M20 39.500a4.500 4.500 0 0 1-.5-8.500c1.500-7 9.500-7 11.500-2 7 0 7 10.500 1 10.500z" fill="url(#cloud)" />
        <circle cx="29.500" cy="11" r="12" fill="#ff99a4" />
        <text x="30.500" y="17" textAnchor="middle" fontFamily="Open Sans" fontSize="17" fill="#1a0010">1</text>
      </svg>
      <div className="ml-[208px] flex">
        {apps.map(({ Icon, state }, i) => (
          <div key={i} className="flex w-[66.05px] justify-center">
            <div className={state === "active" ? "mt-1 flex h-[60px] w-[59px] flex-col items-center rounded-md border border-[#794174] bg-[#702c6a] pt-[11px]" : "mt-4 flex flex-col items-center"}>
              <Icon />
              {state === "running" && <span className="mt-[6px] h-[5px] w-[9px] rounded-full bg-[#b58bb2]" />}
              {state === "active" && <span className="mt-[6px] h-[5px] w-6 rounded-full bg-[#e27fdf]" />}
            </div>
          </div>
        ))}
      </div>
      <div className="mr-[29px] ml-auto">
        <Tray />
      </div>
    </div>
  );
}

export default function App() {
  return (
    <div className="flex h-[1504px] w-[2256px] flex-col overflow-hidden bg-white">
      <TabStrip />
      <Toolbar />
      <WebPage />
      <Taskbar />
    </div>
  );
}
